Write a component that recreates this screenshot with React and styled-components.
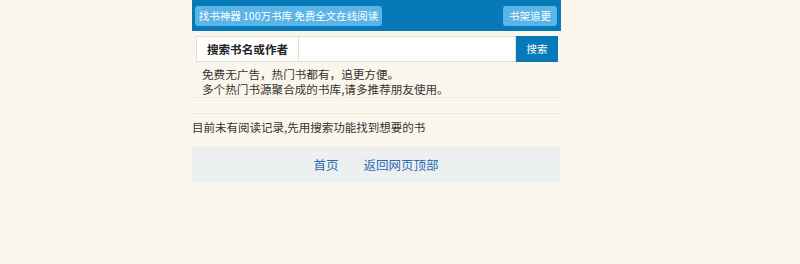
import React from "react";
import styled, { createGlobalStyle } from "styled-components";

const Global = createGlobalStyle`
  html, body { margin: 0; padding: 0; background: #fbf6ec; }
  body { font-family: "Noto Sans CJK SC", "Noto Sans", sans-serif; color: #333; }
`;

const Page = styled.div`
  padding-left: 192px;
`;

const Wrap = styled.div`
  width: 369px;
`;

const Header = styled.div`
  height: 31px;
  background: #0679b8;
  display: flex;
  align-items: center;
  justify-content: space-between;
  padding: 0 4px 0 3px;
  box-sizing: border-box;
`;

const HeadButton = styled.a`
  display: flex;
  align-items: center;
  justify-content: center;
  height: 20px;
  width: ${(p) => p.$w}px;
  background: #5ab4e8;
  border-radius: 3px;
  color: #fff;
  font-size: 10.5px;
  line-height: 20px;
  text-decoration: none;
  white-space: nowrap;
`;

const SearchRow = styled.form`
  display: flex;
  height: 26px;
  margin: 5px 3px 0 4px;
`;

const Label = styled.div`
  width: 102px;
  box-sizing: border-box;
  border: 1px solid #e2ddd2;
  border-right: none;
  background: #fff;
  display: flex;
  align-items: center;
  justify-content: center;
  font-size: 11.6px;
  line-height: 16px;
  font-weight: 700;
  color: #222;
`;

const Input = styled.input`
  flex: 1;
  box-sizing: border-box;
  border: 1px solid #e2ddd2;
  background: #fff;
  outline: none;
  margin: 0;
  height: 26px;
`;

const SearchButton = styled.button`
  width: 42px;
  border: none;
  background: #0679b8;
  color: #fff;
  font-family: inherit;
  font-size: 10.5px;
  line-height: 16px;
  padding: 0;
  height: 26px;
`;

const Intro = styled.div`
  padding: 5px 0 0 10px;
  font-size: 11.6px;
  line-height: 15px;
  color: #333;
  border-bottom: 1px solid #f1ebde;
`;

const IntroLine = styled.div`
  height: 15px;
  line-height: 15px;
  white-space: nowrap;
`;

const Dotted = styled.div`
  margin-top: 15px;
  border-top: 1px dotted #e6dfcf;
`;

const Notice = styled.div`
  font-size: 11.5px;
  line-height: 16px;
  height: 16px;
  margin-top: 5px;
  color: #333;
  white-space: nowrap;
`;

const Footer = styled.div`
  margin-top: 12px;
  height: 36px;
  width: 368px;
  background: #ecf0f1;
  display: flex;
  align-items: center;
  justify-content: center;
  gap: 25px;
`;

const FootLink = styled.a`
  color: #2b6cae;
  font-size: 12.5px;
  line-height: 16px;
  text-decoration: none;
`;

export default function App() {
  return (
    <>
      <Global />
      <Page>
        <Wrap>
          <Header>
            <HeadButton $w={187}>找书神器 100万书库 免费全文在线阅读</HeadButton>
            <HeadButton $w={54}>书架追更</HeadButton>
          </Header>
          <SearchRow onSubmit={(e) => e.preventDefault()}>
            <Label>搜索书名或作者</Label>
            <Input />
            <SearchButton>搜索</SearchButton>
          </SearchRow>
          <Intro>
            <IntroLine>免费无广告，热门书都有，追更方便。</IntroLine>
            <IntroLine>多个热门书源聚合成的书库,请多推荐朋友使用。</IntroLine>
          </Intro>
          <Dotted />
          <Notice>目前未有阅读记录,先用搜索功能找到想要的书</Notice>
          <Footer>
            <FootLink href="#">首页</FootLink>
            <FootLink href="#">返回网页顶部</FootLink>
          </Footer>
        </Wrap>
      </Page>
    </>
  );
}
